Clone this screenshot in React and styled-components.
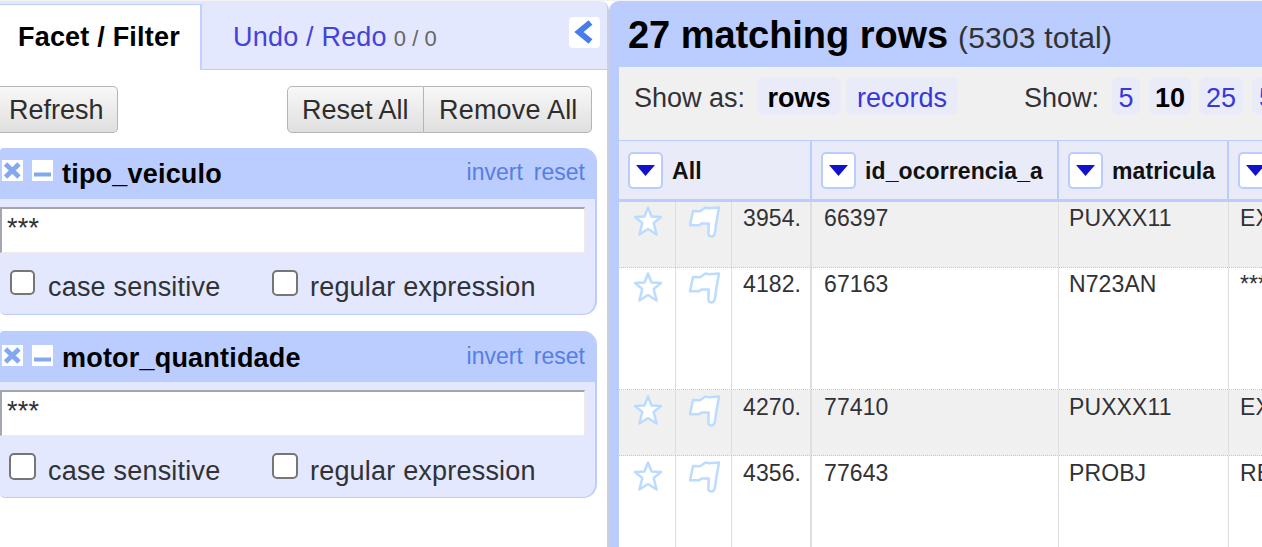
import React from 'react';
import styled, { createGlobalStyle } from 'styled-components';

const c = { blue: '#bbccff', pale: '#e3e8ff', gray: '#f0f0f0', head: '#e9ebf8' };

const Global = createGlobalStyle`
  * { box-sizing: border-box; }
  body { margin: 0; background: #fff; overflow: hidden; font-family: "Liberation Sans", Arial, sans-serif; }
  svg { display: block; flex: none; }
`;

const Page = styled.div`
  display: flex;
  width: 1262px;
  height: 547px;
  overflow: hidden;
  border-top: 1px solid #f3f3f3;
  white-space: nowrap;
  font-size: 27px;
  letter-spacing: 0.2px;
  color: #303236;
`;

const LeftPanel = styled.aside`
  width: 609px;
  flex: none;
  border-right: 2px solid #ccd0dc;
  border-top-right-radius: 9px;
  overflow: hidden;
`;

const Tabs = styled.nav`
  display: flex;
  height: 69px;
  background: ${c.pale};
`;

const ActiveTab = styled.div`
  width: 202px;
  margin-top: 3px;
  padding-left: 18px;
  line-height: 64px;
  font-weight: bold;
  color: #000;
  background: #fff;
  border-top: 1px solid ${c.blue};
  border-right: 2px solid #c4d0ff;
`;

const HistoryTab = styled.div`
  display: flex;
  flex: 1;
  padding: 2px 7px 0 31px;
  line-height: 68px;
  color: #4343da;
  border-bottom: 1px solid ${c.blue};
`;

const Count = styled.span`
  padding: 2px 0 0 7px;
  font-size: 22px;
  letter-spacing: 0;
  color: #666;
`;

const Collapse = styled.div`
  width: 31px;
  height: 31px;
  margin: 14px 0 0 auto;
  border-radius: 4px;
  background: #fff;
`;

const Actions = styled.div`
  display: flex;
  height: 78px;
  padding-top: 16px;
`;

const Button = styled.div`
  width: ${p => p.$w}px;
  height: 47px;
  padding-left: ${p => p.$pad}px;
  margin-left: ${p => p.$ml || 0}px;
  line-height: 46px;
  letter-spacing: ${p => p.$ls || 0}px;
  color: #2d2d2d;
  background: linear-gradient(#f8f8f8, #dfdfdf);
  border: 1px solid #b5b5b5;
  border-width: ${p => p.$bw || '1px'};
  border-radius: ${p => p.$r};
`;

const FacetBox = styled.section`
  width: 597px;
  height: 167px;
  margin-bottom: 16px;
  overflow: hidden;
  background: ${c.pale};
  border: solid ${c.blue};
  border-width: 0 2px 1px 0;
  border-radius: 4px 14px 14px 5px;
`;

const FacetHead = styled.header`
  display: flex;
  height: ${p => p.$h}px;
  line-height: ${p => p.$line}px;
  padding: 0 10px 0 2px;
  background: ${c.blue};
`;

const FacetIcon = styled.div`
  width: 21px;
  height: 21px;
  margin: ${p => p.$top}px 9px 0 0;
  background: #fff;
`;

const FacetName = styled.b`
  flex: 1;
  color: #000;
`;

const FacetLink = styled.span`
  margin-left: ${p => p.$ml || 0}px;
  line-height: ${p => p.$line}px;
  font-size: 23px;
  letter-spacing: 0;
  color: #557fe3;
`;

const Input = styled.div`
  width: 585px;
  height: 46px;
  margin-top: 8px;
  padding-left: 5px;
  line-height: 39px;
  background: #fff;
  border: 1px solid #eeece8;
  border-top: 2px solid #a3a5aa;
  border-left: 2px solid #a3a5b3;
`;

const Options = styled.div`
  display: flex;
  padding: ${p => p.$top}px 0 0 ${p => p.$pad}px;
  line-height: 32px;
`;

const Check = styled.span`
  width: ${p => p.$s}px;
  height: ${p => p.$s}px;
  margin: 0 ${p => p.$mr}px 0 0;
  background: #fff;
  border: 2px solid #767676;
  border-radius: 5px;
`;

const OptionLabel = styled.span`
  width: ${p => p.$w}px;
  padding-top: ${p => p.$drop}px;
`;

const RightPanel = styled.main`
  flex: 1;
  min-width: 0;
  padding-left: 10px;
  background: ${c.blue};
  border-top-left-radius: 10px;
`;

const Summary = styled.header`
  display: flex;
  height: 66px;
  padding-left: 9px;
`;

const Matching = styled.h1`
  margin: 0;
  width: 330px;
  line-height: 68px;
  font-size: 38px;
  letter-spacing: -0.05px;
  color: #000;
`;

const Total = styled.span`
  line-height: 74px;
  font-size: 30px;
`;

const ViewBar = styled.div`
  display: flex;
  height: 73px;
  padding: 10px 0 0 15px;
  background: ${c.gray};
`;

const BarLabel = styled.span`
  flex: none;
  width: ${p => p.$w}px;
  margin-left: ${p => p.$ml || 0}px;
  line-height: 42px;
  letter-spacing: 0;
`;

const Pill = styled.span`
  flex: none;
  width: ${p => p.$w}px;
  height: 38px;
  margin-right: ${p => p.$mr}px;
  line-height: 42px;
  text-align: center;
  letter-spacing: 0;
  font-weight: ${p => (p.$on ? 'bold' : 'normal')};
  color: ${p => (p.$on ? '#000' : '#3838d9')};
  background: #e9ebf8;
  border-radius: 7px;
`;

const TableHead = styled.div`
  display: grid;
  grid-template-columns: 193px 247px 170px 200px;
  height: 62px;
  border-top: 1px solid ${c.blue};
  border-bottom: 3px solid ${c.blue};
  background: ${c.head};
`;

const HeadCell = styled.div`
  display: flex;
  padding: 11px 0 0 9px;
  border-right: 2px solid ${c.blue};
  font-size: 23px;
  font-weight: bold;
  letter-spacing: 0.1px;
  line-height: 38px;
  color: #111;
`;

const Menu = styled.div`
  width: 35px;
  height: 37px;
  margin-right: 9px;
  background: #fff;
  border: 2px solid ${c.blue};
  border-radius: 5px;
`;

const Row = styled.div`
  display: grid;
  grid-template-columns: 57px 56px 80px 247px 170px 200px;
  height: ${p => p.$h}px;
  font-size: 23px;
  letter-spacing: 0.1px;
  line-height: 26px;
  background: ${p => (p.$odd ? c.gray : '#fff')};
  border-bottom: 1px dotted #c8c8c8;
`;

const Cell = styled.div`
  padding: ${p => p.$top}px 0 0 ${p => p.$pad}px;
  border-right: ${p => p.$line || 1}px solid #dedede;
`;

const CloseIcon = () => (
  <svg width="21" height="21" viewBox="0 0 21 21">
    <path d="M3.5 4 17 17M17 4 3.5 17" stroke="#83a8ed" strokeWidth="4.8" />
  </svg>
);
const MinusIcon = () => (
  <svg width="21" height="21" viewBox="0 0 21 21">
    <path d="M2 14.5H19" stroke="#83a8ed" strokeWidth="3.8" />
  </svg>
);
const Chevron = () => (
  <svg width="31" height="31" viewBox="0 0 31 31">
    <path d="M21.5 5.5 10 15 21.5 24.5" fill="none" stroke="#477de9" strokeWidth="6" />
  </svg>
);
const Caret = () => (
  <svg width="31" height="33" viewBox="0 0 31 33">
    <path d="M6 11H25L15.5 22Z" fill="#1212cc" />
  </svg>
);
const Star = () => (
  <svg width="32" height="34" viewBox="0 0 32 34">
    <path d="M16 3.5 19.5 12.5 29 13 21.7 19 24.6 30.5 16 25 7.4 30.5 10.3 19 3 13 12.5 12.5Z"
      fill="#fff" stroke="#bcdcff" strokeWidth="2.5" strokeLinejoin="round" />
  </svg>
);
const Flag = () => (
  <svg width="34" height="36" viewBox="0 0 34 36">
    <path d="M6 7 13 7.2 18.5 3.5 22 4.2 32 3.5 29.5 17.5 28 28Q27 33 24 32.500Q20.500 32 21.500 27L21.700 19.500 14.500 19.500 12 21.300 3 21.300Z"
      fill="#fff" stroke="#bcdcff" strokeWidth="2.5" strokeLinejoin="round" />
  </svg>
);

function Facet({ name, headLine, linkLine, iconTop, optionPad, box, drop }) {
  return (
    <FacetBox>
      <FacetHead $h={51} $line={headLine}>
        <FacetIcon $top={iconTop}><CloseIcon /></FacetIcon>
        <FacetIcon $top={iconTop}><MinusIcon /></FacetIcon>
        <FacetName>{name}</FacetName>
        <FacetLink $line={linkLine}>invert</FacetLink>
        <FacetLink $line={linkLine} $ml={11}>reset</FacetLink>
      </FacetHead>
      <Input>***</Input>
      <Options $top={17} $pad={optionPad}>
        <Check $s={box} $mr={48 - optionPad - box} />
        <OptionLabel $w={224} $drop={drop}>case sensitive</OptionLabel>
        <Check $s={26} $mr={12} />
        <OptionLabel $w={230} $drop={drop}>regular expression</OptionLabel>
      </Options>
    </FacetBox>
  );
}

const rows = [
  { n: '3954.', id: '66397', plate: 'PUXXX11', next: 'EX', h: 66, top: 3 },
  { n: '4182.', id: '67163', plate: 'N723AN', next: '***', h: 122, top: 3 },
  { n: '4270.', id: '77410', plate: 'PUXXX11', next: 'EX', h: 66, top: 4 },
  { n: '4356.', id: '77643', plate: 'PROBJ', next: 'RE', h: 122, top: 4 },
];

export default function App() {
  return (
    <>
      <Global />
      <Page>
        <LeftPanel>
          <Tabs>
            <ActiveTab>Facet / Filter</ActiveTab>
            <HistoryTab>
              Undo / Redo<Count>0 / 0</Count>
              <Collapse><Chevron /></Collapse>
            </HistoryTab>
          </Tabs>
          <Actions>
            <Button $w={118} $pad={9} $bw="1px 1px 1px 0" $r="0 5px 5px 0">Refresh</Button>
            <Button $w={137} $pad={14} $ml={169} $r="5px 0 0 5px">Reset All</Button>
            <Button $w={168} $pad={15} $ls={0.2} $bw="1px 1px 1px 0" $r="0 5px 5px 0">Remove All</Button>
          </Actions>
          <Facet name="tipo_veiculo" headLine={52} linkLine={49} iconTop={12} optionPad={10} box={25} drop={1} />
          <Facet name="motor_quantidade" headLine={54} linkLine={51} iconTop={14} optionPad={9} box={27} drop={2} />
        </LeftPanel>
        <RightPanel>
          <Summary>
            <Matching>27 matching rows</Matching>
            <Total>(5303 total)</Total>
          </Summary>
          <ViewBar>
            <BarLabel $w={123}>Show as:</BarLabel>
            <Pill $w={84} $mr={5} $on>rows</Pill>
            <Pill $w={112} $mr={0}>records</Pill>
            <BarLabel $ml={66} $w={88}>Show:</BarLabel>
            <Pill $w={28} $mr={9}>5</Pill>
            <Pill $w={42} $mr={8} $on>10</Pill>
            <Pill $w={44} $mr={9}>25</Pill>
            <Pill $w={44} $mr={0}>50</Pill>
          </ViewBar>
          <TableHead>
            <HeadCell><Menu><Caret /></Menu>All</HeadCell>
            <HeadCell><Menu><Caret /></Menu>id_ocorrencia_a</HeadCell>
            <HeadCell><Menu><Caret /></Menu>matricula</HeadCell>
            <HeadCell><Menu><Caret /></Menu></HeadCell>
          </TableHead>
          {rows.map((r, i) => (
            <Row key={r.n} $h={r.h} $odd={i % 2 === 0}>
              <Cell $top={r.top - 1} $pad={13}><Star /></Cell>
              <Cell $top={r.top - 1} $pad={11}><Flag /></Cell>
              <Cell $top={r.top} $pad={11} $line={2}>{r.n}</Cell>
              <Cell $top={r.top} $pad={12}>{r.id}</Cell>
              <Cell $top={r.top} $pad={10}>{r.plate}</Cell>
              <Cell $top={r.top} $pad={11}>{r.next}</Cell>
            </Row>
          ))}
        </RightPanel>
      </Page>
    </>
  );
}
